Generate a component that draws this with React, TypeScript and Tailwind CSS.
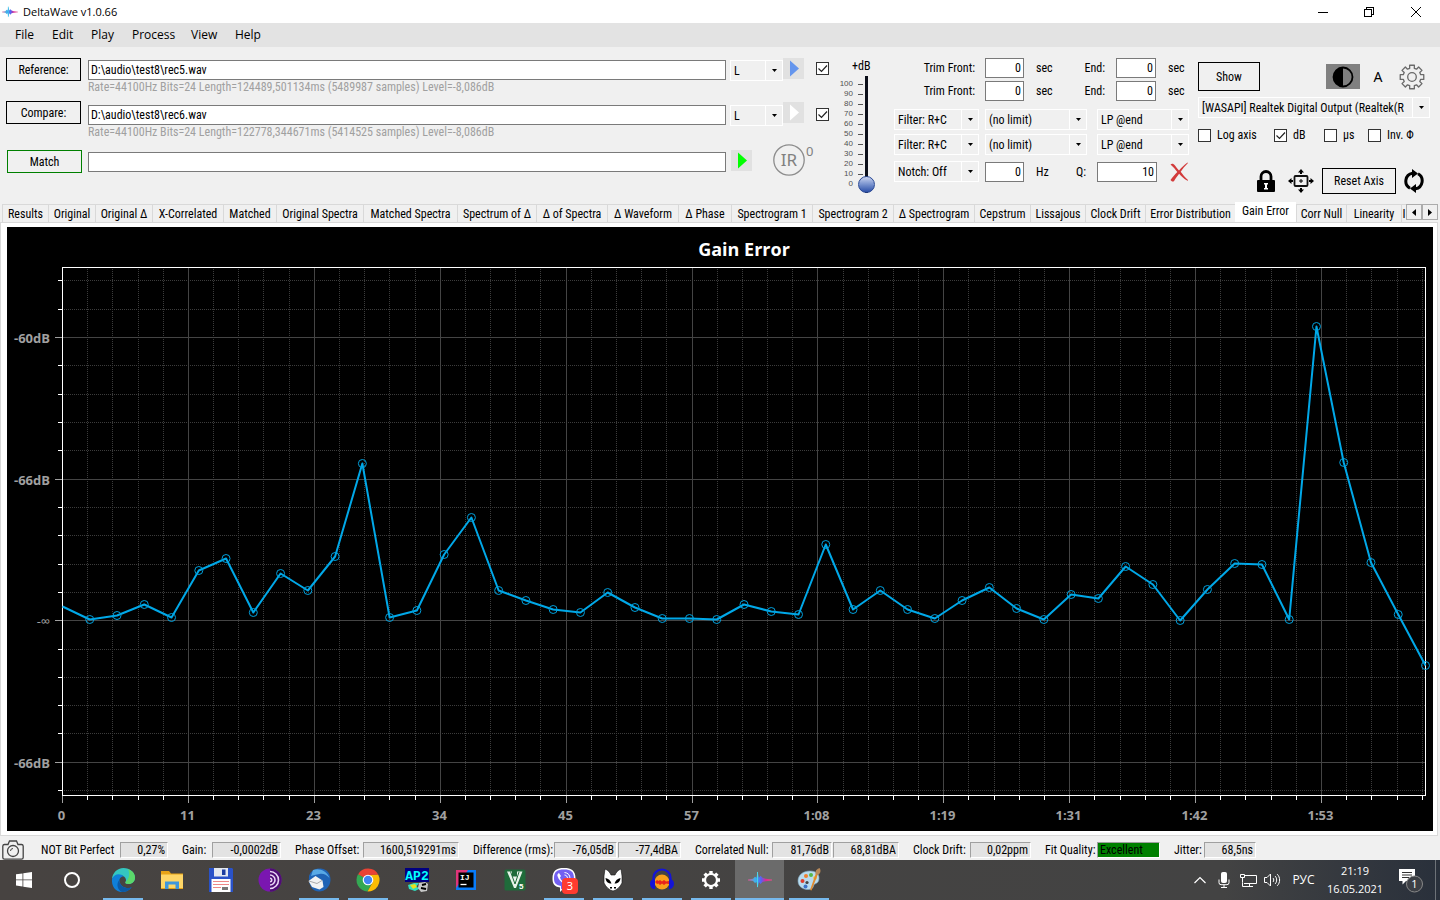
import { useState } from "react";
import type { ReactNode } from "react";

const menuItems = [
  { label: "File", width: "w-[37px]" },
  { label: "Edit", width: "w-[39px]" },
  { label: "Play", width: "w-[41px]" },
  { label: "Process", width: "w-[59px]" },
  { label: "View", width: "w-[44px]" },
  { label: "Help", width: "w-[44px]" },
];

const tabs = [
  { label: "Results", width: "w-[46px]" },
  { label: "Original", width: "w-[47px]" },
  { label: "Original Δ", width: "w-[57px]" },
  { label: "X-Correlated", width: "w-[71px]" },
  { label: "Matched", width: "w-[53px]" },
  { label: "Original Spectra", width: "w-[87px]" },
  { label: "Matched Spectra", width: "w-[94px]" },
  { label: "Spectrum of Δ", width: "w-[79px]" },
  { label: "Δ of Spectra", width: "w-[71px]" },
  { label: "Δ Waveform", width: "w-[71px]" },
  { label: "Δ Phase", width: "w-[53px]" },
  { label: "Spectrogram 1", width: "w-[81px]" },
  { label: "Spectrogram 2", width: "w-[81px]" },
  { label: "Δ Spectrogram", width: "w-[81px]" },
  { label: "Cepstrum", width: "w-[56px]" },
  { label: "Lissajous", width: "w-[55px]" },
  { label: "Clock Drift", width: "w-[60px]" },
  { label: "Error Distribution", width: "w-[90px]" },
  { label: "Gain Error", width: "w-[61px]" },
  { label: "Corr Null", width: "w-[50px]" },
  { label: "Linearity", width: "w-[55px]" },
  { label: "I", width: "w-[5px]" },
];

const stats = [
  { label: "NOT Bit Perfect", labelWidth: "w-[79px]", values: [{ text: "0,27%", width: "w-[48px]" }] },
  { label: "Gain:", labelWidth: "w-[30px]", values: [{ text: "-0,0002dB", width: "w-[69px]" }] },
  { label: "Phase Offset:", labelWidth: "w-[68px]", values: [{ text: "1600,519291ms", width: "w-[96px]" }] },
  {
    label: "Difference (rms):",
    labelWidth: "w-[81px]",
    values: [
      { text: "-76,05dB", width: "w-[63px]" },
      { text: "-77,4dBA", width: "w-[63px]" },
    ],
  },
  {
    label: "Correlated Null:",
    labelWidth: "w-[77px]",
    values: [
      { text: "81,76dB", width: "w-[60px]" },
      { text: "68,81dBA", width: "w-[66px]" },
    ],
  },
  { label: "Clock Drift:", labelWidth: "w-[57px]", values: [{ text: "0,02ppm", width: "w-[61px]" }] },
  { label: "Fit Quality:", labelWidth: "w-[52px]", values: [{ text: "Excellent", width: "w-[63px]", good: true }] },
  { label: "Jitter:", labelWidth: "w-[30px]", values: [{ text: "68,5ns", width: "w-[52px]" }] },
];

/* ---------- form controls ---------- */

function Combo({ value, label, className }: { value: string; label: string; className: string }) {
  return (
    <div className={`flex h-[21px] shrink-0 border border-white ${className}`}>
      <select aria-label={label} className="min-w-0 flex-1 appearance-none pl-[3px] outline-none">
        <option>{value}</option>
      </select>
      <span className="flex w-[17px] items-center justify-center border-l border-white">
        <svg width="5" height="3" viewBox="0 0 5 3" aria-hidden="true">
          <path d="M0 0h5L2.5 3z" />
        </svg>
      </span>
    </div>
  );
}

function NumberBox({ value, label, className }: { value: string; label: string; className: string }) {
  return (
    <input
      aria-label={label}
      defaultValue={value}
      className={`h-5 shrink-0 border border-[#7a7a7a] bg-white pr-[2px] text-right outline-none ${className}`}
    />
  );
}

function Check({ label, checked, children }: { label?: string; checked?: boolean; children?: ReactNode }) {
  return (
    <label className="flex items-center gap-[6px]">
      <span className="grid h-[13px] w-[13px] shrink-0">
        <input
          type="checkbox"
          defaultChecked={checked}
          aria-label={label}
          className="peer col-start-1 row-start-1 h-[13px] w-[13px] appearance-none border border-[#333] bg-white"
        />
        <svg
          viewBox="0 0 13 13"
          className="pointer-events-none invisible col-start-1 row-start-1 peer-checked:visible"
          fill="none"
          stroke="#222"
          strokeWidth="1.2"
        >
          <path d="M2.5 6.5l3 3 5.5-6" />
        </svg>
      </span>
      {children}
    </label>
  );
}

function PlayButton({ label, color }: { label: string; color: string }) {
  return (
    <button aria-label={label} className="h-[21px] w-[21px] shrink-0 bg-[#e1e1e1]">
      <svg viewBox="0 0 21 21" fill={color}>
        <path d="M7 2.5v16l9-8z" />
      </svg>
    </button>
  );
}

/* ---------- window chrome ---------- */

function Spark({ size }: { size: number }) {
  return (
    <svg width={size} height={size} viewBox="0 0 24 24" aria-hidden="true">
      <defs>
        <linearGradient id="spark" x1="0" x2="1">
          <stop offset="0" stopColor="#e05090" />
          <stop offset="0.3" stopColor="#35b8f0" />
          <stop offset="0.55" stopColor="#5a60f0" />
          <stop offset="0.75" stopColor="#e02890" />
          <stop offset="1" stopColor="#e0508a" />
        </linearGradient>
      </defs>
      <path d="M0 11.5l5-.8 2-2 1.500 1 1-6 1.500 6 1.500-2 2 2 3 1 6.500.8v1l-6.500.8-3 .7-2 2-1.500-2-1.500 6-1-6L7 15l-2-2-5-.6z" fill="url(#spark)" />
      <path d="M9.500 4v15" stroke="#4ad8e8" strokeWidth="1" />
    </svg>
  );
}

function TitleBar() {
  return (
    <header className="flex h-[23px] items-center bg-white pl-[2px] font-['Open_Sans','Noto_Sans',sans-serif] text-[12px]">
      <Spark size={16} />
      <h1 className="ml-[5px] flex-1 text-[11px]">DeltaWave v1.0.66</h1>
      <div className="flex h-[21px] text-black">
        <button aria-label="Minimize" className="flex w-[46px] items-center justify-center">
          <svg width="10" height="10" viewBox="0 0 10 10" stroke="currentColor" shapeRendering="crispEdges">
            <path d="M0 5.500h10" />
          </svg>
        </button>
        <button aria-label="Restore" className="flex w-[45px] items-center justify-center">
          <svg width="10" height="10" viewBox="0 0 10 10" fill="none" stroke="currentColor" shapeRendering="crispEdges">
            <path d="M.5 2.500h7v7h-7zM2.500 2.500v-2h7v7h-2" />
          </svg>
        </button>
        <button aria-label="Close" className="flex w-[49px] items-center justify-center">
          <svg width="10" height="10" viewBox="0 0 10 10" stroke="currentColor">
            <path d="M0 0l10 10M10 0L0 10" />
          </svg>
        </button>
      </div>
    </header>
  );
}

function MenuBar() {
  return (
    <nav className="flex h-6 items-center bg-[#e3e3e3] pl-[15px] font-['Open_Sans','Noto_Sans',sans-serif] text-[12px]">
      {menuItems.map((item) => (
        <button key={item.label} className={`text-left ${item.width}`}>
          {item.label}
        </button>
      ))}
    </nav>
  );
}

/* ---------- toolbar ---------- */

function Sources() {
  return (
    <section className="flex flex-1">
      <div className="flex w-[76px] flex-col">
        <button className="h-[23px] w-[75px] border border-black">Reference:</button>
        <button className="mt-5 h-[23px] w-[75px] border border-black">Compare:</button>
        <button className="mt-[26px] h-[23px] w-[75px] self-end border border-[#008000]">Match</button>
      </div>

      <div className="ml-[6px] flex flex-1 flex-col pt-[2px]">
        <input
          aria-label="Reference file"
          defaultValue="D:\audio\test8\rec5.wav"
          className="h-5 border border-[#7a7a7a] bg-white px-[2px] outline-none"
        />
        <p className="h-[25px] text-[#a0a0a0]">
          Rate=44100Hz Bits=24 Length=124489,501134ms (5489987 samples) Level=-8,086dB
        </p>
        <input
          aria-label="Compare file"
          defaultValue="D:\audio\test8\rec6.wav"
          className="h-5 border border-[#7a7a7a] bg-white px-[2px] outline-none"
        />
        <p className="h-[27px] text-[#a0a0a0]">
          Rate=44100Hz Bits=24 Length=122778,344671ms (5414525 samples) Level=-8,086dB
        </p>
        <input aria-label="Match progress" className="h-5 border border-[#7a7a7a] bg-white px-[2px] outline-none" />
      </div>

      <div className="ml-1 flex w-[99px] flex-col">
        <div className="flex h-11 items-start">
          <div className="pt-[2px]">
            <Combo label="Reference channel" value="L" className="w-[53px]" />
          </div>
          <PlayButton label="Play reference" color="#6495ed" />
          <div className="ml-3 pt-1">
            <Check label="Use reference" checked />
          </div>
        </div>
        <div className="flex h-[42px] items-start">
          <div className="pt-[3px]">
            <Combo label="Compare channel" value="L" className="w-[53px]" />
          </div>
          <PlayButton label="Play compare" color="#ffffff" />
          <div className="ml-3 pt-[6px]">
            <Check label="Use compare" checked />
          </div>
        </div>
        <div className="flex h-8 items-center gap-[21px] pl-[1px]">
          <PlayButton label="Play match" color="#00ff00" />
          <button aria-label="Impulse response" className="flex items-start gap-[1px] text-[#808080]">
            <svg width="32" height="32" viewBox="0 0 32 32" fill="none" stroke="#8c8c8c" strokeWidth="1.300">
              <circle cx="16" cy="16" r="15.200" />
              <text x="16" y="22" textAnchor="middle" fontSize="17" fill="#808080" stroke="none" className="font-['Noto_Sans',sans-serif]">
                IR
              </text>
            </svg>
            <span className="font-['Noto_Sans',sans-serif] text-[13px] leading-[14px]">0</span>
          </button>
        </div>
      </div>
    </section>
  );
}

function GainSlider() {
  const marks = [100, 90, 80, 70, 60, 50, 40, 30, 20, 10, 0];
  return (
    <section className="ml-[10px] w-9">
      <label htmlFor="gain" className="block h-[18px] pl-[13px] leading-4">
        +dB
      </label>
      <div className="flex">
        <div className="mt-[3px] w-[14px] text-right font-['Liberation_Sans',sans-serif] text-[8px] leading-[10px] text-[#505050]">
          {marks.map((mark) => (
            <div key={mark}>{mark}</div>
          ))}
        </div>
        <svg width="8" height="116" viewBox="0 0 8 116" stroke="#555" className="-mr-[5px] ml-1" shapeRendering="crispEdges">
          {marks.slice(0, 10).map((mark, i) => (
            <path key={mark} d={`M1 ${8.5 + i * 10}h5`} />
          ))}
        </svg>
        <input
          id="gain"
          type="range"
          min="0"
          max="100"
          defaultValue="0"
          className="-ml-[2px] h-[117px] w-[17px] shrink-0 appearance-none bg-[linear-gradient(to_right,transparent_7px,#0b0e19_7px,#0b0e19_10px,transparent_10px)] [direction:rtl] [writing-mode:vertical-lr] [&::-webkit-slider-thumb]:h-[17px] [&::-webkit-slider-thumb]:w-[17px] [&::-webkit-slider-thumb]:appearance-none [&::-webkit-slider-thumb]:rounded-full [&::-webkit-slider-thumb]:border [&::-webkit-slider-thumb]:border-[#2b4a95] [&::-webkit-slider-thumb]:bg-linear-to-b [&::-webkit-slider-thumb]:from-[#c9d3ef] [&::-webkit-slider-thumb]:to-[#2d4fa8]"
        />
      </div>
    </section>
  );
}

function TrimRow({ id }: { id: string }) {
  return (
    <div className="flex h-5 items-center">
      <span className="w-[81px] text-right">Trim Front:</span>
      <NumberBox label={`Trim front ${id}`} value="0" className="ml-[10px] w-[39px]" />
      <span className="ml-3 w-7">sec</span>
      <span className="w-[41px] text-right">End:</span>
      <NumberBox label={`Trim end ${id}`} value="0" className="ml-[11px] w-10" />
      <span className="ml-3">sec</span>
    </div>
  );
}

function FilterRow({ id }: { id: string }) {
  return (
    <div className="flex">
      <Combo label={`Filter ${id}`} value="Filter: R+C" className="w-[85px]" />
      <Combo label={`Filter limit ${id}`} value="(no limit)" className="ml-[6px] w-[102px]" />
      <Combo label={`Low pass ${id}`} value="LP @end" className="ml-[10px] w-[92px]" />
    </div>
  );
}

function Filters() {
  return (
    <section className="ml-[19px] w-[296px]">
      <TrimRow id="reference" />
      <div className="mt-[3px]">
        <TrimRow id="compare" />
      </div>
      <div className="mt-2 flex flex-col gap-1">
        <FilterRow id="reference" />
        <FilterRow id="compare" />
      </div>
      <div className="mt-[6px] flex items-center">
        <Combo label="Notch" value="Notch: Off" className="w-[85px]" />
        <NumberBox label="Notch frequency" value="0" className="ml-[6px] w-[39px]" />
        <span className="ml-3 w-10">Hz</span>
        <span className="w-[21px]">Q:</span>
        <NumberBox label="Q" value="10" className="w-[60px]" />
        <button aria-label="Clear filters" className="ml-3">
          <svg width="20" height="20" viewBox="0 0 20 20" fill="#d23b3b">
            <path d="M1.500 2.500C3 1 4.500 1.500 6 3.500c1.500 2 2.600 3.600 4 5 2.500-3 5.500-5.800 8.500-8 .5.300.3.800-.2 1.300-2.500 2.400-4.700 5-6.600 8 2 2.800 4.300 5.700 7.300 8.200.3.600-.3.800-.9.500-3-1.500-5.600-4-8-6.700-2 2.600-3.700 5.200-5 7.200-1.200 1-2.800.4-3.600-1C3.800 14.800 6 12 8.300 9.900 6.300 7.400 4 4.800 1.500 2.500z" />
          </svg>
        </button>
      </div>
    </section>
  );
}

function GearOutline() {
  const teeth = 8;
  const points: string[] = [];
  for (let i = 0; i < teeth; i++) {
    const base = (i * 2 * Math.PI) / teeth;
    [
      [-0.26, 9],
      [-0.2, 12],
      [0.2, 12],
      [0.26, 9],
    ].forEach(([offset, r]) => {
      points.push(`${13 + r * Math.sin(base + offset)},${13 - r * Math.cos(base + offset)}`);
    });
  }
  return (
    <svg width="26" height="26" viewBox="0 0 26 26" fill="none" stroke="#6a6a6a" strokeWidth="1.300" strokeLinejoin="round">
      <polygon points={points.join(" ")} />
      <circle cx="13" cy="13" r="4.300" />
    </svg>
  );
}

function ViewOptions() {
  return (
    <section className="ml-2 w-[232px] pt-1">
      <div className="flex h-[29px] items-center">
        <button className="h-[29px] w-[62px] border border-black">Show</button>
        <button aria-label="Contrast" className="ml-auto flex h-[25px] w-[34px] items-center justify-center bg-[#808080]">
          <svg width="22" height="22" viewBox="0 0 22 22">
            <circle cx="11" cy="11" r="9.500" fill="none" stroke="#000" strokeWidth="1.800" />
            <path d="M11 1.500a9.500 9.500 0 0 0 0 19z" />
          </svg>
        </button>
        <button className="ml-[13px] w-[10px] font-['Noto_Sans',sans-serif] text-[14px]">A</button>
        <button aria-label="Settings" className="ml-4 mr-[5px]">
          <GearOutline />
        </button>
      </div>
      <div className="mt-[6px]">
        <Combo label="Output device" value="[WASAPI] Realtek Digital Output (Realtek(R" className="w-full" />
      </div>
      <div className="mt-[9px] flex h-4 items-center">
        <div className="w-[76px]">
          <Check>Log axis</Check>
        </div>
        <div className="w-[50px]">
          <Check checked>dB</Check>
        </div>
        <div className="w-11">
          <Check>μs</Check>
        </div>
        <Check>Inv. Φ</Check>
      </div>
      <div className="mt-[25px] flex items-center justify-end pr-[6px]">
        <button aria-label="Lock">
          <svg width="20" height="22" viewBox="0 0 20 22">
            <path d="M5 10V6.500a5 5 0 0 1 10 0V10" fill="none" stroke="#000" strokeWidth="2.800" />
            <rect x="1" y="10" width="18" height="12" rx="1" />
            <path d="M8 13h4v1.500h-1V18h1v1.500H8V18h1v-3.500H8z" fill="#fff" />
          </svg>
        </button>
        <button aria-label="Fit to window" className="ml-3">
          <svg width="26" height="24" viewBox="0 0 26 24">
            <rect x="6.500" y="7" width="13" height="10" rx="1" fill="none" stroke="#111" strokeWidth="1.800" />
            <path d="M12.500 10h1v1.500H15v1h-1.500V14h-1v-1.500H11v-1h1.500zM13 0l3 3.500h-2V5h-2V3.500h-2zM13 24l3-3.500h-2V19h-2v1.500h-2zM0 12l3.500-3v2H5v2H3.500v2zM26 12l-3.500-3v2H21v2h1.500v2z" />
          </svg>
        </button>
        <button className="ml-2 h-[26px] w-[74px] border border-black">Reset Axis</button>
        <button aria-label="Refresh" className="ml-2">
          <svg width="20" height="24" viewBox="0 0 20 24">
            <path d="M6 19.200A8 8 0 0 1 8.500 4.300M14 4.800a8 8 0 0 1-2.500 14.900" fill="none" stroke="#000" strokeWidth="3" />
            <path d="M8 0l6 4.600L8 9zM12 24l-6-4.600L12 15z" />
          </svg>
        </button>
      </div>
    </section>
  );
}

/* ---------- tabs ---------- */

function TabBar() {
  const [active, setActive] = useState("Gain Error");
  return (
    <div className="flex items-start pr-[2px]">
      <div role="tablist" className="flex h-5 min-w-0 flex-1 items-end overflow-hidden pl-[2px]">
        {tabs.map((tab) => (
          <button
            key={tab.label}
            role="tab"
            aria-selected={tab.label === active}
            onClick={() => setActive(tab.label)}
            className={`shrink-0 whitespace-nowrap text-center ${tab.width} ${
              tab.label === active
                ? "h-5 bg-white pb-[3px]"
                : "h-[18px] border-l border-t border-[#d9d9d9] bg-[#f0f0f0]"
            }`}
          >
            {tab.label}
          </button>
        ))}
      </div>
      <div className="mt-[2px] flex">
        <button aria-label="Scroll tabs left" className="flex h-4 w-4 items-center justify-center border border-[#acacac] bg-[#f0f0f0]">
          <svg width="4" height="7" viewBox="0 0 4 7">
            <path d="M4 0v7L0 3.500z" />
          </svg>
        </button>
        <button aria-label="Scroll tabs right" className="flex h-4 w-4 items-center justify-center border border-[#acacac] bg-[#f0f0f0]">
          <svg width="4" height="7" viewBox="0 0 4 7">
            <path d="M0 0v7l4-3.500z" />
          </svg>
        </button>
      </div>
    </div>
  );
}

/* ---------- chart ---------- */

const samples = [
  379, 392, 388, 377, 390, 343, 331, 385, 346, 363, 329, 236, 390, 383, 327, 290, 363, 373, 382, 385, 365, 380, 391,
  391, 392, 377, 384, 387, 317, 382, 363, 382, 391, 373, 360, 381, 392, 367, 371, 339, 357, 393, 362, 336, 337, 392,
  99, 235, 335, 387, 438,
];
const plot = { left: 55, right: 1418, top: 40, bottom: 568 };
const xStep = 125.9;
const yStep = 141.6;
const xLabels = ["0", "11", "23", "34", "45", "57", "1:08", "1:19", "1:31", "1:42", "1:53"];
const yLabels = ["-60dB", "-66dB", "-∞", "-66dB"];

function GainErrorChart() {
  const px = (i: number) => plot.left + (i * (plot.right - plot.left)) / (samples.length - 1) + 0.5;
  const minorX = Array.from({ length: 55 }, (_, i) => i).filter((i) => i % 5 !== 0);
  const minorY = Array.from({ length: 19 }, (_, i) => i - 2).filter((i) => i % 5 !== 0);
  const gridX = (i: number) => Math.round(plot.left + (i * xStep) / 5) + 0.5;
  const gridY = (i: number) => Math.round(110 + (i * yStep) / 5) + 0.5;

  return (
    <svg viewBox="0 0 1426 604" className="block h-auto w-full bg-black font-['Open_Sans','Noto_Sans',sans-serif]" role="img" aria-label="Gain Error">
      <text x="737" y="29" textAnchor="middle" fontSize="18" fontWeight="700" fill="#fff">
        Gain Error
      </text>

      <g shapeRendering="crispEdges" fill="none">
        <g stroke="#3c3c3c" strokeDasharray="1 1">
          {minorX.map((i) => (
            <path key={i} d={`M${gridX(i)} ${plot.top}V${plot.bottom}`} />
          ))}
          {minorY.map((i) => (
            <path key={i} d={`M${plot.left} ${gridY(i)}H${plot.right}`} />
          ))}
        </g>
        <g stroke="#444">
          {xLabels.map((label, i) => (
            <path key={label} d={`M${gridX(i * 5)} ${plot.top}V${plot.bottom}`} />
          ))}
          {yLabels.map((_, i) => (
            <path key={i} d={`M${plot.left} ${gridY(i * 5)}H${plot.right}`} />
          ))}
        </g>
        <g stroke="#fff">
          <path d={`M${plot.left + 0.5} ${plot.top + 0.5}H${plot.right + 0.5}V${plot.bottom + 0.5}H${plot.left + 0.5}z`} />
          {minorX.map((i) => (
            <path key={i} d={`M${gridX(i)} ${plot.bottom}v5`} />
          ))}
          {minorY.map((i) => (
            <path key={i} d={`M${plot.left} ${gridY(i)}h-4`} />
          ))}
        </g>
        <g stroke="#a0a0a0">
          {xLabels.map((label, i) => (
            <path key={label} d={`M${gridX(i * 5)} ${plot.bottom + 1}v7`} />
          ))}
          {yLabels.map((_, i) => (
            <path key={i} d={`M${plot.left} ${gridY(i * 5)}h-7`} />
          ))}
        </g>
      </g>

      <g fontSize="13" fontWeight="700" fill="#a0a0a0">
        {xLabels.map((label, i) => (
          <text key={label} x={gridX(i * 5) - 1} y="593" textAnchor="middle">
            {label}
          </text>
        ))}
        {yLabels.map((label, i) => (
          <text key={i} x="43" y={gridY(i * 5) + 5} textAnchor="end" fontWeight={label === "-∞" ? 400 : 700}>
            {label}
          </text>
        ))}
      </g>

      <polyline
        points={samples.map((y, i) => `${px(i)},${y + 0.5}`).join(" ")}
        fill="none"
        stroke="#00a8e8"
        strokeWidth="2"
        strokeLinejoin="round"
      />
      <g fill="none" stroke="#00a0dc">
        {samples.slice(1).map((y, i) => (
          <circle key={i} cx={px(i + 1)} cy={y + 0.5} r="4" />
        ))}
      </g>
    </svg>
  );
}

/* ---------- status bar ---------- */

function StatusBar() {
  return (
    <footer className="flex h-6 items-center pl-[2px] pt-1">
      <button aria-label="Take snapshot" className="mr-[17px] shrink-0">
        <svg width="22" height="20" viewBox="0 0 22 20" fill="none" stroke="#444" strokeWidth="1.300">
          <path d="M2.500 4.500H6L7.500 1h7L16 4.500h3.500A1.700 1.700 0 0 1 21.200 6v11.500a1.700 1.700 0 0 1-1.700 1.700h-17A1.700 1.700 0 0 1 .8 17.500V6a1.700 1.700 0 0 1 1.700-1.500z" />
          <circle cx="11" cy="11" r="5.500" />
          <path d="M8.500 11a2.500 2.500 0 0 1 2.500-2.500" strokeWidth="1" />
        </svg>
      </button>
      <dl className="flex gap-[14px] whitespace-nowrap">
        {stats.map((stat) => (
          <div key={stat.label} className="flex items-center">
            <dt className={stat.labelWidth}>{stat.label}</dt>
            <div className="flex gap-[1px]">
              {stat.values.map((v) => (
                <dd
                  key={v.text}
                  className={`h-4 border border-b-white border-l-[#a0a0a0] border-r-white border-t-[#a0a0a0] leading-[15px] ${v.width} ${
                    "good" in v ? "bg-[#008000] pl-[2px] text-left" : "bg-[#e3e3e3] pr-[2px] text-right"
                  }`}
                >
                  {v.text}
                </dd>
              ))}
            </div>
          </div>
        ))}
      </dl>
    </footer>
  );
}

/* ---------- taskbar ---------- */

const apps: { name: string; running?: boolean; active?: boolean; icon: ReactNode }[] = [
  {
    name: "Edge",
    running: true,
    icon: (
      <>
        <path d="M1 11C1.500 5 6 0 12.500 0 19 0 24 4.500 24 9.500c0 4-3 6.500-6.500 6.500-2.500 0-3.500-1-3-2 1-1.500.5-4-1.500-5.500C10 6.300 4 6.500 1 11z" fill="#34c6c0" />
        <path d="M17 1C21 2.500 24 5.500 24 9.500c0 4-3 6.500-6.500 6.500-2.500 0-3.500-1-3-2 3-2.500 5-7.500 2.500-13z" fill="#5bd86a" />
        <path d="M1 11c2-5.500 8.500-6 12-2.500-3-.5-5 2-4.500 5 .8 4.500 6 8 12 6-2.500 3-6 4.500-9.500 4.500C4.500 24 .3 18 1 11z" fill="#0f7fd8" />
        <path d="M8.500 11.500c-1 5.500 5.500 10.500 12.500 7.500-3 4-6.500 5-10 5-4-1.500-6.500-7.500-2.500-12.500z" fill="#0c59a4" />
      </>
    ),
  },
  {
    name: "File Explorer",
    icon: (
      <>
        <path d="M1 3h8l2 2.500h12V21H1z" fill="#e8a317" />
        <path d="M1 6.500h22V20H1z" fill="#ffd667" />
        <path d="M5 13.500h14V21h-3.500v-4.500h-7V21H5z" fill="#3f97dd" />
      </>
    ),
  },
  {
    name: "Total Commander",
    icon: (
      <>
        <path d="M0 0h23l1 1v23H0z" fill="#2a52c8" />
        <path d="M5 0h14v8.500H5z" fill="#e4e8f0" />
        <path d="M13 1.500h3.500V7H13z" fill="#1c3da0" />
        <path d="M2.500 11h19v13h-19z" fill="#fff" />
        <path d="M4 13.500h16M4 16.500h16M4 19.500h8" stroke="#e88" strokeWidth="1" />
        <path d="M13 19h6v3h-6z" fill="#777" />
      </>
    ),
  },
  {
    name: "Tor Browser",
    icon: (
      <>
        <circle cx="12" cy="12" r="11.500" fill="#7a16b0" />
        <path d="M12 .5a11.500 11.500 0 0 1 0 23z" fill="#4e0d75" />
        <path d="M12 3.500a8.500 8.500 0 0 1 0 17M12 7a5 5 0 0 1 0 10M12 10.300a1.700 1.700 0 0 1 0 3.400" fill="none" stroke="#e8d5f5" strokeWidth="1.600" />
      </>
    ),
  },
  {
    name: "Thunderbird",
    running: true,
    icon: (
      <>
        <path d="M2 8C4 2 9 0 14 .5 20 1 24 6 23.500 12.500 23 19 18 23.500 12 23.500 6 23.500 1 18 2 8z" fill="#1f63b5" />
        <path d="M6 2c6-2.500 14 1 16.500 8-3-3.500-7-5-10-4C9 7 6 7 4 8z" fill="#58a9e6" />
        <path d="M1.500 13l7-5 7 4.500 1 6.500-4 2.500L5 19z" fill="#f2f2f2" />
        <path d="M2 13l8 2.500 5-3" fill="none" stroke="#aaa" />
      </>
    ),
  },
  {
    name: "Chrome",
    running: true,
    icon: (
      <>
        <path d="M12 12L2 6.500A11.500 11.500 0 0 1 22.300 6.700L12 7z" fill="#ea4335" />
        <path d="M2 6.300A11.500 11.500 0 0 0 11.500 23.500L16 15l-4-3z" fill="#34a853" />
        <path d="M22.300 6.800A11.500 11.500 0 0 1 11.500 23.500L16.500 14.500 14 7z" fill="#fbbc05" />
        <circle cx="12" cy="12" r="5.300" fill="#fff" />
        <circle cx="12" cy="12" r="4.200" fill="#4285f4" />
      </>
    ),
  },
  {
    name: "AP2",
    icon: (
      <>
        <path d="M0 0h24v14H0z" fill="#000080" />
        <text x="12" y="12" textAnchor="middle" fontSize="13" fontWeight="700" fill="#00ffff" className="font-['Liberation_Mono',monospace]">
          AP2
        </text>
        <path d="M3 17l6-2h5l-3 4 5 1-6 3-6-2z" fill="#30e0c0" />
        <path d="M5 17l5-1 2 3-4 2z" fill="#e8e020" />
        <path d="M14 15l6-1 3 2-1 7-6 1-3-4z" fill="#c8c8c8" />
        <path d="M17 17l4-1M16 20l5 1" stroke="#000" strokeWidth="2" />
      </>
    ),
  },
  {
    name: "IntelliJ IDEA",
    icon: (
      <>
        <path d="M2 2h20v20H2z" fill="#087cfa" />
        <path d="M2 2h12L2 20z" fill="#e0357a" />
        <path d="M4.500 4.500h15v15h-15z" />
        <text x="6" y="12" fontSize="8" fontWeight="700" fill="#fff" className="font-['Liberation_Mono',monospace]">
          IJ
        </text>
        <path d="M6.500 16.500h6" stroke="#fff" strokeWidth="1.300" />
      </>
    ),
  },
  {
    name: "VU5",
    icon: (
      <>
        <rect x="1.500" y="1.500" width="21" height="21" rx="1.500" fill="#1f6b3a" />
        <path d="M4 3.500h5v5h5v-5h5.500L13 20h-2z" fill="#e8f2ea" />
        <path d="M7.500 3.500L12 16l4-12" fill="none" stroke="#1f6b3a" strokeWidth="1" />
        <text x="16" y="21" fontSize="8" fontWeight="700" fill="#fff" className="font-['Liberation_Sans',sans-serif]">
          5
        </text>
      </>
    ),
  },
  {
    name: "Viber",
    running: true,
    icon: (
      <>
        <path d="M12 0c7.500 0 11.500 2.500 11.500 10.500S19 20 12 20l-4 4v-4.500C2 18.500.5 15.500.5 10.500.5 2.500 4.500 0 12 0z" fill="#fff" />
        <path d="M12 1.500c7 0 10 2 10 9s-4 8-10 8l-3 3V18c-5.500-.8-7-3.500-7-7.500 0-7 3-9 10-9z" fill="#7360f2" />
        <path d="M7 5l2 3-1 1.500c.8 2.500 2.500 4 4.500 5l1.500-1.500 3 2c-.5 2-2 2.500-4 1.500C9 14.500 6.500 11.500 5.500 8 5 6.500 6 5.500 7 5z" fill="#fff" />
        <path d="M12.500 4.500c3.500.3 5.500 2.500 5.500 6M12.500 7c2 .3 3 1.500 3 3.500" fill="none" stroke="#fff" />
        <rect x="10" y="10" width="16" height="16" rx="4" fill="#ff3b30" />
        <text x="18" y="22" textAnchor="middle" fontSize="11" fill="#fff" className="font-['Noto_Sans',sans-serif]">
          3
        </text>
      </>
    ),
  },
  {
    name: "foobar2000",
    running: true,
    icon: (
      <>
        <path d="M4 1c3 1 5 3.500 6 6h4c1-2.500 3-5 6-6l1 7v7c-2 4-5 7-9 8-4-1-7-4-9-8V8z" fill="#fff" stroke="#111" strokeWidth=".6" />
        <path d="M4.500 10c3 .5 5 2.500 6 5.500-3.500 0-5.500-1.500-6-5.500zM19.500 10c-3 .5-5 2.500-6 5.500 3.500 0 5.500-1.500 6-5.500zM9 19h2v1.500H9zM13 19h2v1.500h-2z" />
      </>
    ),
  },
  {
    name: "Audacity",
    running: true,
    icon: (
      <>
        <circle cx="12" cy="14" r="7.500" fill="#f9a01b" />
        <path d="M5 14l2-2 1.500 1 1.500-1 2 1.500 2-1.500 2 1.500 3-.5v3l-3-.5-2 1.500-2-1.500-2 1.500-1.500-1.500L7 16z" fill="#e8241c" />
        <path d="M3.500 13V9.500a8.500 8 0 0 1 17 0V13" fill="none" stroke="#1414d8" strokeWidth="2.200" />
        <path d="M0 15.500c0-3 2-4.500 5-4.500v10c-3 0-5-2-5-5.500zM24 15.500c0-3-2-4.500-5-4.500v10c3 0 5-2 5-5.500z" fill="#1414d8" />
      </>
    ),
  },
  {
    name: "Settings",
    running: true,
    icon: (
      <>
        <circle cx="12" cy="12" r="6" fill="none" stroke="#fff" strokeWidth="2.200" />
        <path d="M12 3v3M12 18v3M3 12h3M18 12h3M5.600 5.600l2.200 2.200M16.200 16.200l2.200 2.200M18.400 5.600l-2.200 2.200M7.800 16.200l-2.200 2.200" stroke="#fff" strokeWidth="3.400" />
      </>
    ),
  },
  { name: "DeltaWave", running: true, active: true, icon: null },
  {
    name: "Paint",
    running: true,
    icon: (
      <>
        <path d="M1 13C1 7 6 3 13 3c6 0 9 3 9 7s-2 5-4 6c-2 .8-1 3-3 4.500C11 23 1 21 1 13z" fill="#b9dbee" stroke="#7fa9c4" strokeWidth=".6" />
        <circle cx="5.500" cy="13" r="2" fill="#e03c2c" />
        <circle cx="9" cy="8" r="2" fill="#f08030" />
        <circle cx="14" cy="7" r="2" fill="#58b848" />
        <circle cx="18" cy="10" r="1.800" fill="#f4c430" />
        <circle cx="10" cy="14.500" r="1.600" fill="#444" />
        <circle cx="8.500" cy="18.500" r="2" fill="#3e74c8" />
        <path d="M13 22l6-17 2 1-6.500 16.500z" fill="#e08a30" />
        <path d="M18.500 6c-.5-3 1-5 4-6 1.500 2 1.500 5-1.500 7z" fill="#b98a5a" />
      </>
    ),
  },
];

function Taskbar() {
  return (
    <nav aria-label="Taskbar" className="flex h-10 items-stretch bg-linear-to-r from-[#474341] via-[#434343] via-85% to-[#29303b] font-['Open_Sans','Noto_Sans',sans-serif] text-[12px] text-white">
      <button aria-label="Start" className="flex w-12 items-center justify-center">
        <svg width="16" height="16" viewBox="0 0 16 16" fill="#fff">
          <path d="M0 2.300L6.500 1.400v6.100H0zM7.300 1.300L16 0v7.500H7.300zM0 8.300h6.500v6.100L0 13.500zM7.300 8.300H16V16l-8.700-1.300z" />
        </svg>
      </button>
      <button aria-label="Search" className="flex w-12 items-center justify-center">
        <svg width="16" height="16" viewBox="0 0 16 16" fill="none" stroke="#fff" strokeWidth="2">
          <circle cx="8" cy="8" r="7" />
        </svg>
      </button>
      <div className="ml-[2px] flex">
        {apps.map((app) => (
          <button
            key={app.name}
            aria-label={app.name}
            className={`flex w-[49px] flex-col items-center ${app.active ? "bg-[#6b6b6b]" : ""}`}
          >
            <span className="flex flex-1 items-center pt-[2px]">
              {app.icon ? (
                <svg width="24" height="24" viewBox="0 0 24 24" className="overflow-visible">
                  {app.icon}
                </svg>
              ) : (
                <Spark size={24} />
              )}
            </span>
            {app.running && <span className={`h-[2px] bg-[#76b9ed] ${app.active ? "w-full" : "w-10"}`} />}
            {!app.running && <span className="h-[2px]" />}
          </button>
        ))}
      </div>

      <div className="ml-auto flex items-center">
        <button aria-label="Show hidden icons">
          <svg width="12" height="8" viewBox="0 0 12 8" fill="none" stroke="#fff" strokeWidth="1.200">
            <path d="M.5 7L6 1.500 11.500 7" />
          </svg>
        </button>
        <svg width="12" height="16" viewBox="0 0 12 16" className="ml-3" fill="none" stroke="#fff">
          <rect x="3.500" y=".5" width="5" height="10" rx="1" fill="#fff" />
          <path d="M1 7.500v3.200a2 2 0 0 0 2 2h6a2 2 0 0 0 2-2V7.500M6 12.500v3M3 15.500h6" />
        </svg>
        <svg width="17" height="15" viewBox="0 0 17 15" className="ml-[10px]" fill="none" stroke="#fff">
          <path d="M4.500 2.500h12v8H4M9.500 10.500v3M5 13.500h8M.5 1.500h4v3h-4zM2.500 4.500v5M2.500 9.500v4h3" />
        </svg>
        <svg width="17" height="14" viewBox="0 0 17 14" className="ml-[7px]" fill="none" stroke="#fff">
          <path d="M.5 4.500H3L6.500 1v12L3 9.500H.5zM9 5c1 1 1 3 0 4M11 3c2.200 2 2.200 6 0 8M13.200 1.200c3.200 3 3.200 8.600 0 11.600" />
        </svg>
        <button className="ml-[11px] w-[23px]">РУС</button>
        <time className="ml-3 w-[56px] whitespace-nowrap text-center text-[11px] leading-[18px]">
          21:19
          <br />
          16.05.2021
        </time>
        <button aria-label="1 new notification" className="ml-[15px]">
          <svg width="26" height="26" viewBox="0 0 26 26">
            <path d="M1 2h16v12H8l-3.500 3.500V14H1z" fill="#fff" />
            <path d="M4 5.500h10M4 8h10M4 10.500h7" stroke="#333" />
            <circle cx="16.500" cy="17" r="8" fill="#3c3f45" stroke="#888" />
            <text x="16.500" y="21" textAnchor="middle" fontSize="11" fill="#fff">
              1
            </text>
          </svg>
        </button>
        <span className="ml-[11px] mr-1 h-10 w-px bg-[#6d7278]" />
      </div>
    </nav>
  );
}

export default function App() {
  return (
    <div className="flex min-h-screen flex-col bg-[#f0f0f0] font-['Roboto_Condensed',Roboto,'Liberation_Sans',sans-serif] text-[12px] leading-[14px] text-black">
      <TitleBar />
      <MenuBar />
      <main className="flex flex-1 flex-col">
        <div className="flex pb-2 pl-[6px] pr-[10px] pt-[11px]">
          <Sources />
          <GainSlider />
          <Filters />
          <ViewOptions />
        </div>
        <TabBar />
        <div className="mr-[2px] border border-[#d9d9d9] bg-white pb-1 pl-[6px] pr-1 pt-1">
          <GainErrorChart />
        </div>
      </main>
      <StatusBar />
      <Taskbar />
    </div>
  );
}
